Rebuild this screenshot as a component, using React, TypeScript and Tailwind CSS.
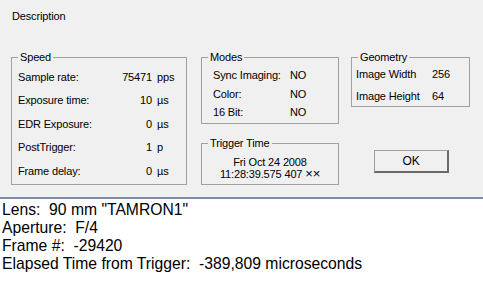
import React from 'react';

const font = { fontFamily: '"Liberation Sans", Arial, sans-serif' };

function Group({ title, className, children }: { title: string; className?: string; children: React.ReactNode }) {
  return (
    <div className={`relative border border-[#a0a0a0] ${className ?? ''}`}>
      <span className="absolute -top-[7px] left-[6px] bg-[#f0f0f0] px-[2px] leading-[13px]">{title}</span>
      {children}
    </div>
  );
}

const speed = [
  ['Sample rate:', '75471', 'pps'],
  ['Exposure time:', '10', 'µs'],
  ['EDR Exposure:', '0', 'µs'],
  ['PostTrigger:', '1', 'p'],
  ['Frame delay:', '0', 'µs'],
];

const modes = [
  ['Sync Imaging:', 'NO'],
  ['Color:', 'NO'],
  ['16 Bit:', 'NO'],
];

export default function App() {
  return (
    <div className="w-[483px] h-[289px] overflow-hidden bg-white" style={font}>
      <div className="h-[197px] bg-[#f0f0f0] text-[11px] tracking-[-0.15px] text-black">
        <div className="pt-[10px] pl-[12px] leading-[13px]">Description</div>
        <div className="flex mt-[34px] pl-[11px]">
          <Group title="Speed" className="w-[176px] h-[128px] pt-[7px]">
            {speed.map(([label, value, unit]) => (
              <div key={label} className="flex items-center h-[23.5px] pl-[6px]">
                <span className="w-[104px]">{label}</span>
                <span className="w-[30px] text-right">{value}</span>
                <span className="ml-[5px]">{unit}</span>
              </div>
            ))}
          </Group>
          <div className="flex flex-col ml-[14px] w-[138px]">
            <Group title="Modes" className="h-[67px] pt-[8px]">
              {modes.map(([label, value]) => (
                <div key={label} className="flex items-center h-[18.5px] pl-[11px]">
                  <span className="w-[77px]">{label}</span>
                  <span>{value}</span>
                </div>
              ))}
            </Group>
            <Group title="Trigger Time" className="h-[42px] mt-[19px] pt-[12px] text-center leading-[12px]">
              <div>Fri Oct 24 2008</div>
              <div>
                11:28:39.575 407 <span className="text-[13px] leading-[12px]">××</span>
              </div>
            </Group>
          </div>
          <div className="flex flex-col ml-[12px] w-[119px]">
            <Group title="Geometry" className="h-[50px] pt-[5px]">
              <div className="flex items-center h-[22px] pl-[4px]">
                <span className="w-[76px]">Image Width</span>
                <span>256</span>
              </div>
              <div className="flex items-center h-[22px] pl-[4px]">
                <span className="w-[76px]">Image Height</span>
                <span>64</span>
              </div>
            </Group>
            <button className="mt-[43px] ml-[23px] w-[75px] h-[23px] bg-[#f0f0f0] border border-[#a0a0a0] border-r-2 border-b-2 border-r-[#696969] border-b-[#696969] text-[12px] leading-none">
              OK
            </button>
          </div>
        </div>
      </div>
      <div className="h-[2px] bg-[#7d8aa5]" />
      <div className="pt-[2px] pl-[2px] text-[15.7px] leading-[18px] text-black">
        <div>Lens:&nbsp; 90 mm "TAMRON1"</div>
        <div>Aperture:&nbsp; F/4</div>
        <div>Frame #:&nbsp; -29420</div>
        <div>Elapsed Time from Trigger:&nbsp; -389,809 microseconds</div>
      </div>
    </div>
  );
}
